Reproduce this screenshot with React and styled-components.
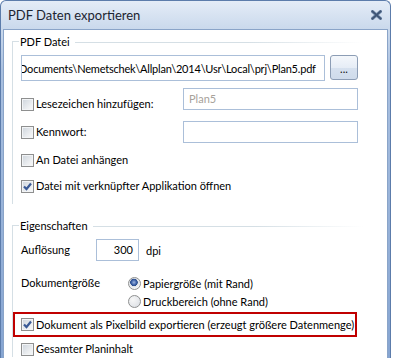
import React from 'react';
import styled, { createGlobalStyle } from 'styled-components';

const GlobalStyle = createGlobalStyle`
  html, body {
    margin: 0;
    padding: 0;
    background: #fff;
  }
  body {
    font-family: Lato, "Liberation Sans", sans-serif;
    font-size: 11px;
    color: #000;
  }
  * {
    box-sizing: border-box;
  }
`;

function CloseIcon() {
  return (
    <svg width="11" height="10" viewBox="0 0 11 10">
      <path d="M1.5 1.5 L9.5 8.5 M9.5 1.5 L1.5 8.5" stroke="#8aa0bd" strokeWidth="3.4" strokeLinecap="square" />
      <path d="M1.5 1.5 L9.5 8.5 M9.5 1.5 L1.5 8.5" stroke="#3f5677" strokeWidth="2" strokeLinecap="square" />
    </svg>
  );
}

function CheckBox({ checked }) {
  return (
    <Box>
      {checked && (
        <svg width="11" height="11" viewBox="0 0 11 11">
          <path d="M2 5.5 L4.5 8 L9 2.5" fill="none" stroke="#3a5a96" strokeWidth="2.2" />
        </svg>
      )}
    </Box>
  );
}

function Check({ checked, children, width, shift }) {
  return (
    <CheckLabel $width={width} $shift={shift}>
      <CheckBox checked={checked} />
      <span>{children}</span>
    </CheckLabel>
  );
}

function Radio({ selected, children }) {
  return (
    <RadioRow>
      <RadioCircle $selected={selected} />
      <span>{children}</span>
    </RadioRow>
  );
}

export default function App() {
  return (
    <>
      <GlobalStyle />
      <Window>
        <TitleBar>
          <Title>PDF Daten exportieren</Title>
          <CloseIcon />
        </TitleBar>
        <Content>
          <Group>
            <GroupTitle>PDF Datei</GroupTitle>
            <GroupBody>
              <PathRow>
                <PathInput>
                  <PathText>Documents\Nemetschek\Allplan\2014\Usr\Local\prj\Plan5.pdf</PathText>
                </PathInput>
                <BrowseButton>...</BrowseButton>
              </PathRow>
              <FieldRow $gap={5}>
                <Check width={162} shift={10}>Lesezeichen hinzufügen:</Check>
                <TextBox $muted>Plan5</TextBox>
              </FieldRow>
              <FieldRow $gap={9}>
                <Check width={162}>Kennwort:</Check>
                <TextBox />
              </FieldRow>
              <CheckRow $gap={9}>
                <Check>An Datei anhängen</Check>
              </CheckRow>
              <CheckRow $gap={10}>
                <Check checked>Datei mit verknüpfter Applikation öffnen</Check>
              </CheckRow>
            </GroupBody>
          </Group>

          <Group $gap={15}>
            <GroupTitle>Eigenschaften</GroupTitle>
            <GroupBody $bottom={0}>
              <FieldRow $gap={0}>
                <FieldLabel $width={75}>Auflösung</FieldLabel>
                <NumberBox>300</NumberBox>
                <Unit>dpi</Unit>
              </FieldRow>
              <OptionRow>
                <FieldLabel $width={107}>Dokumentgröße</FieldLabel>
                <RadioList>
                  <Radio selected>Papiergröße (mit Rand)</Radio>
                  <Radio>Druckbereich (ohne Rand)</Radio>
                </RadioList>
              </OptionRow>
              <Highlight>
                <Check checked>Dokument als Pixelbild exportieren (erzeugt größere Datenmenge)</Check>
              </Highlight>
              <CheckRow $gap={4}>
                <Check>Gesamter Planinhalt</Check>
              </CheckRow>
            </GroupBody>
          </Group>
        </Content>
      </Window>
    </>
  );
}

const Window = styled.div`
  width: 391px;
  height: 358px;
  display: flex;
  flex-direction: column;
  border: 1px solid #5c7cab;
  border-bottom: none;
  border-radius: 6px 6px 0 0;
  background: linear-gradient(#e4ecf7, #cad9ec 28px, #a9c0e0 70px, #86a5d2);
  overflow: hidden;
`;

const TitleBar = styled.div`
  height: 28px;
  flex-shrink: 0;
  display: flex;
  align-items: center;
  justify-content: space-between;
  padding: 0 8px 0 7px;
`;

const Title = styled.div`
  font-size: 13px;
  color: #1c2430;
  line-height: 20px;
`;

const Content = styled.div`
  flex: 1;
  margin: 0 2px;
  background: #fff;
  border: 1px solid #8aa4c8;
  border-bottom: none;
  padding: 5px 0 0 8px;
`;

const Group = styled.section`
  margin-top: ${(p) => p.$gap || 0}px;
  margin-right: 24px;
`;

const GroupTitle = styled.div`
  display: flex;
  align-items: center;
  height: 14px;
  line-height: 14px;
  &::before {
    content: '';
    align-self: flex-end;
    width: 6px;
    height: 7px;
    border-left: 1px solid #d5dfe5;
    border-top: 1px solid #d5dfe5;
    margin-right: 1px;
  }
  &::after {
    content: '';
    flex: 1;
    height: 1px;
    margin-left: 5px;
    background: linear-gradient(to right, #d5dfe5, #d5dfe5 60%, rgba(213, 223, 229, 0));
  }
`;

const GroupBody = styled.div`
  display: flex;
  flex-direction: column;
  border-left: 1px solid #d5dfe5;
  padding: 6px 0 ${(p) => (p.$bottom ?? 10)}px 8px;
`;

const PathRow = styled.div`
  display: flex;
  align-items: flex-start;
  gap: 5px;
`;

const PathInput = styled.div`
  width: 304px;
  height: 26px;
  border: 1px solid #abbfd9;
  display: flex;
  align-items: center;
  overflow: hidden;
  white-space: nowrap;
`;

const PathText = styled.span`
  margin-left: -3px;
  letter-spacing: -0.2px;
`;

const BrowseButton = styled.div`
  width: 28px;
  height: 25px;
  border: 1px solid #8c9db5;
  border-radius: 3px;
  background: linear-gradient(#f4f7fb, #e6edf6 50%, #d6e1ef 51%, #cfdbeb);
  display: flex;
  align-items: center;
  justify-content: center;
  line-height: 1;
  padding-top: 2px;
  color: #111;
`;

const FieldRow = styled.div`
  display: flex;
  align-items: center;
  margin-top: ${(p) => p.$gap}px;
`;

const CheckRow = styled.div`
  display: flex;
  align-items: center;
  height: 16px;
  margin-top: ${(p) => p.$gap}px;
`;

const CheckLabel = styled.label`
  display: flex;
  align-items: center;
  gap: 2px;
  line-height: 16px;
  white-space: nowrap;
  width: ${(p) => (p.$width ? `${p.$width}px` : 'auto')};
  margin-top: ${(p) => p.$shift || 0}px;
`;

const Box = styled.span`
  width: 13px;
  height: 13px;
  flex-shrink: 0;
  border: 1px solid #8e8f8f;
  background: linear-gradient(135deg, #cdd4dc, #eef0f2 70%, #f8f8f8);
  box-shadow: inset 0 0 0 1px #f2f4f6;
  display: flex;
  align-items: center;
  justify-content: center;
`;

const TextBox = styled.div`
  width: 175px;
  height: 22px;
  border: 1px solid #abbfd9;
  padding: 0 5px;
  line-height: 20px;
  color: ${(p) => (p.$muted ? '#a7a29a' : '#000')};
`;

const FieldLabel = styled.div`
  width: ${(p) => p.$width}px;
  line-height: 18px;
  flex-shrink: 0;
`;

const NumberBox = styled.div`
  width: 43px;
  height: 22px;
  border: 1px solid #abbfd9;
  text-align: right;
  padding-right: 5px;
  line-height: 20px;
`;

const Unit = styled.span`
  margin-left: 7px;
`;

const OptionRow = styled.div`
  display: flex;
  align-items: flex-start;
  margin-top: 13px;
`;

const RadioList = styled.div`
  display: flex;
  flex-direction: column;
`;

const RadioRow = styled.label`
  display: flex;
  align-items: center;
  gap: 2px;
  height: 18px;
  white-space: nowrap;
`;

const RadioCircle = styled.span`
  width: 13px;
  height: 13px;
  flex-shrink: 0;
  border-radius: 50%;
  border: 1px solid #8e8f8f;
  background: ${(p) =>
    p.$selected
      ? 'radial-gradient(circle at 45% 40%, #9fb6e0 0, #3d62a8 2.5px, #2a4b8a 3.5px, #dfe3e8 4px, #f4f5f6 6px)'
      : 'radial-gradient(circle at 35% 35%, #f7f7f7, #d8dce2)'};
`;

const Highlight = styled.div`
  display: flex;
  align-items: center;
  width: 344px;
  height: 25px;
  margin: 2px 0 0 -8px;
  padding-left: 6px;
  border: 2px solid #c00000;
`;
